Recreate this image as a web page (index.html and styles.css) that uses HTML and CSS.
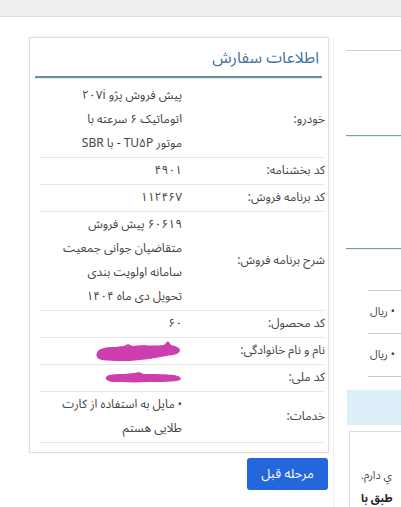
FILE: index.html
```html
<!DOCTYPE html>
<html lang="fa">
<head>
<meta charset="utf-8">
<link rel="stylesheet" href="styles.css">
</head>
<body>
<div class="topbar"></div>
<div class="main">
  <div class="left-col">
    <div class="card" dir="rtl">
      <h3 class="card-title">اطلاعات سفارش</h3>
      <table class="info">
        <tr>
          <td class="lbl">خودرو:</td>
          <td class="val">پیش فروش پژو ۲۰۷i<br>اتوماتیک ۶ سرعته با<br>موتور TU۵P - با SBR</td>
        </tr>
        <tr>
          <td class="lbl">کد بخشنامه:</td>
          <td class="val">۴۹۰۱</td>
        </tr>
        <tr>
          <td class="lbl">کد برنامه فروش:</td>
          <td class="val">۱۱۲۴۶۷</td>
        </tr>
        <tr>
          <td class="lbl">شرح برنامه فروش:</td>
          <td class="val">۶۰۶۱۹ پیش فروش<br>متقاضیان جوانی جمعیت<br>سامانه اولویت بندی<br>تحویل دی ماه ۱۴۰۴</td>
        </tr>
        <tr>
          <td class="lbl">کد محصول:</td>
          <td class="val">۶۰</td>
        </tr>
        <tr>
          <td class="lbl">نام و نام خانوادگی:</td>
          <td class="val">
            <svg class="redact" width="90" height="22" viewBox="0 0 90 22">
              <path d="M3 13 C4 8 12 7 22 7 L40 6 C52 5 62 6 70 5 L74 1 L77 5 C81 6 85 7 86 10 C86 14 80 15 72 16 C62 18 50 20 36 21 C22 21 10 21 5 19 C2 17 2 15 3 13 Z" fill="#cf3eae"/>
              <path d="M14 9 L30 7 L34 5 L38 7 L52 6" stroke="#cf3eae" stroke-width="2" fill="none"/>
            </svg>
          </td>
        </tr>
        <tr>
          <td class="lbl">کد ملی:</td>
          <td class="val">
            <svg class="redact" width="80" height="14" viewBox="0 0 80 14">
              <path d="M2 6 C4 3 12 3 20 3 L30 2 C34 1 37 1 39 3 C50 3 62 3 70 4 C76 5 78 7 76 9 C70 11 58 11 44 11 C30 12 16 11 8 11 C3 10 1 8 2 6 Z" fill="#cf3eae"/>
            </svg>
          </td>
        </tr>
        <tr class="last">
          <td class="lbl">خدمات:</td>
          <td class="val"><span class="bullet">•</span> مایل به استفاده از کارت<br>طلایی هستم</td>
        </tr>
      </table>
    </div>
    <div class="actions" dir="rtl">
      <button class="btn">مرحله قبل</button>
    </div>
  </div>
  <div class="right-col" dir="rtl">
    <div class="rline l1"></div>
    <div class="rline l2"></div>
    <div class="rinput"></div>
    <div class="rline l3"></div>
    <div class="price-rows">
      <div class="price">• ریال</div>
      <div class="price">• ریال</div>
    </div>
    <div class="alert"></div>
    <div class="terms">
      <p class="t1">ي دارم.</p>
      <p class="t2">طبق با</p>
    </div>
  </div>
</div>
</body>
</html>
```

FILE: styles.css
```css
html, body {
  margin: 0;
  padding: 0;
  background: #ffffff;
  overflow: hidden;
  width: 401px;
  height: 507px;
  font-family: "Noto Sans Arabic", "Noto Naskh Arabic", "DejaVu Sans", "Noto Sans", sans-serif;
  color: #333;
}

.topbar {
  height: 16px;
  background: #efefef;
  border-bottom: 1px solid #dcdcdc;
}

.main {
  display: flex;
  align-items: flex-start;
  padding-left: 29px;
  padding-top: 20px;
  gap: 4px;
}

.left-col {
  width: 300px;
  flex: none;
}

.card {
  box-sizing: border-box;
  width: 300px;
  border: 1px solid #dedede;
  box-shadow: 0 0 2px rgba(0, 0, 0, 0.08);
  padding: 6px 3px 9px 5px;
  background: #fff;
}

.card-title {
  margin: 0 3px 0 0;
  padding: 4px 3px 8px;
  font-size: 16px;
  font-weight: normal;
  color: #3e73a0;
  border-bottom: 2px solid #6b929c;
  box-shadow: 0 1px 0 #d6ecf3;
  line-height: 20px;
}

.info {
  width: 285px;
  margin: 5px 0 0 auto;
  border-collapse: collapse;
  font-size: 12px;
  color: #444;
}

.info td {
  padding: 1px 0;
  line-height: 24px;
  vertical-align: middle;
  border-bottom: 1px solid #e6e6e6;
}

.info .lbl {
  width: 143px;
  text-align: right;
  white-space: nowrap;
}

.info .val {
  text-align: right;
  padding-right: 0;
  white-space: nowrap;
}

.redact {
  display: block;
  margin-right: -2px;
}

.bullet {
  font-size: 11px;
}

.actions {
  display: flex;
  padding-top: 5px;
}

.btn {
  font-family: inherit;
  font-size: 13px;
  color: #fff;
  background: #2466dc;
  border: none;
  border-radius: 3px;
  width: 81px;
  height: 32px;
  margin-right: 1px;
}

.right-col {
  flex: none;
  width: 300px;
  height: 470px;
  border-right: 1px solid #f0f0f0;
  border-left: 1px solid #f0f0f0;
}

.rline {
  height: 0;
  margin-left: 12px;
}

.l1 {
  margin-top: 13px;
  border-top: 1px solid #cfcfcf;
}

.l2 {
  margin-top: 84px;
  border-top: 1px solid #7f9aa4;
  box-shadow: 0 1px 0 #e2f1f6;
}

.rinput {
  margin: 21px 0 0 59px;
  width: 60px;
  height: 32px;
  border: 1px solid #c8c8c8;
  border-right: none;
}

.l3 {
  margin-top: 57px;
  border-top: 1px solid #7f9aa4;
  box-shadow: 0 1px 0 #e2f1f6;
}

.price-rows {
  margin: 41px 0 0 34px;
  border-top: 1px solid #c9c9c9;
}

.price {
  text-align: left;
  font-size: 11px;
  line-height: 42px;
  height: 42px;
  border-bottom: 1px solid #c9c9c9;
  color: #444;
  direction: ltr;
  unicode-bidi: plaintext;
  padding-left: 2px;
}

.alert {
  margin: 13px 0 0 13px;
  height: 35px;
  background: #ddeff8;
}

.terms {
  margin: 6px 0 0 15px;
  border-left: 1px solid #dcdcdc;
  border-top: 1px solid #dcdcdc;
  height: 80px;
  padding: 32px 0 0 11px;
  box-sizing: border-box;
  display: flex;
  flex-direction: column;
  align-items: flex-end;
  overflow: hidden;
}

.terms p {
  margin: 0;
  font-size: 11px;
  line-height: 23px;
  white-space: nowrap;
}

.t1 {
  color: #444;
}

.t2 {
  font-weight: bold;
  color: #222;
}
```
